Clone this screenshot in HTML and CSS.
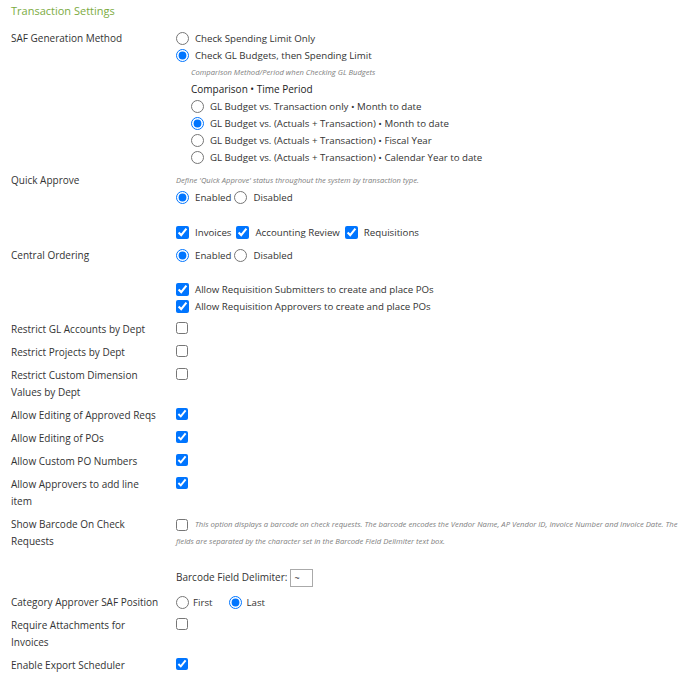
FILE: index.html
```html
<!DOCTYPE html>
<html lang="en">
<head>
    <meta charset="UTF-8">
    <title>Transaction Settings</title>
    <link rel="stylesheet" href="styles.css">
</head>
<body>
    <div class="settings">
        <h2 class="section-title">Transaction Settings</h2>

        <div class="row">
            <div class="label">SAF Generation Method</div>
            <div class="field">
                <label class="opt"><input type="radio" name="saf"> Check Spending Limit Only</label>
                <label class="opt"><input type="radio" name="saf" checked> Check GL Budgets, then Spending Limit</label>
                <div class="sub">
                    <div class="note">Comparison Method/Period when Checking GL Budgets</div>
                    <div class="sub-title">Comparison &bull; Time Period</div>
                    <label class="opt"><input type="radio" name="period"> GL Budget vs. Transaction only &bull; Month to date</label>
                    <label class="opt"><input type="radio" name="period" checked> GL Budget vs. (Actuals + Transaction) &bull; Month to date</label>
                    <label class="opt"><input type="radio" name="period"> GL Budget vs. (Actuals + Transaction) &bull; Fiscal Year</label>
                    <label class="opt"><input type="radio" name="period"> GL Budget vs. (Actuals + Transaction) &bull; Calendar Year to date</label>
                </div>
            </div>
        </div>

        <div class="row">
            <div class="label">Quick Approve</div>
            <div class="field">
                <div class="note flush">Define 'Quick Approve' status throughout the system by transaction type.</div>
                <div class="inline">
                    <label class="opt"><input type="radio" name="quick" checked> Enabled</label>
                    <label class="opt"><input type="radio" name="quick"> Disabled</label>
                </div>
                <div class="spacer tall"></div>
                <div class="inline wide">
                    <label class="opt"><input type="checkbox" checked> Invoices</label>
                    <label class="opt"><input type="checkbox" checked> Accounting Review</label>
                    <label class="opt"><input type="checkbox" checked> Requisitions</label>
                </div>
            </div>
        </div>

        <div class="row">
            <div class="label">Central Ordering</div>
            <div class="field">
                <div class="inline">
                    <label class="opt"><input type="radio" name="central" checked> Enabled</label>
                    <label class="opt"><input type="radio" name="central"> Disabled</label>
                </div>
                <div class="spacer"></div>
                <label class="opt"><input type="checkbox" checked> Allow Requisition Submitters to create and place POs</label>
                <label class="opt"><input type="checkbox" checked> Allow Requisition Approvers to create and place POs</label>
            </div>
        </div>

        <div class="row">
            <div class="label">Restrict GL Accounts by Dept</div>
            <div class="field"><input type="checkbox" class="solo"></div>
        </div>
        <div class="row">
            <div class="label">Restrict Projects by Dept</div>
            <div class="field"><input type="checkbox" class="solo"></div>
        </div>
        <div class="row">
            <div class="label">Restrict Custom Dimension Values by Dept</div>
            <div class="field"><input type="checkbox" class="solo"></div>
        </div>
        <div class="row">
            <div class="label">Allow Editing of Approved Reqs</div>
            <div class="field"><input type="checkbox" class="solo" checked></div>
        </div>
        <div class="row">
            <div class="label">Allow Editing of POs</div>
            <div class="field"><input type="checkbox" class="solo" checked></div>
        </div>
        <div class="row">
            <div class="label">Allow Custom PO Numbers</div>
            <div class="field"><input type="checkbox" class="solo" checked></div>
        </div>
        <div class="row">
            <div class="label">Allow Approvers to add line item</div>
            <div class="field"><input type="checkbox" class="solo" checked></div>
        </div>

        <div class="row">
            <div class="label">Show Barcode On Check Requests</div>
            <div class="field">
                <p class="note para"><input type="checkbox" class="inline-box"> This option displays a barcode on check requests. The barcode encodes the Vendor Name, AP Vendor ID, Invoice Number and Invoice Date. The fields are separated by the character set in the Barcode Field Delimiter text box.</p>
                <div class="spacer"></div>
                <div class="delimiter">
                    Barcode Field Delimiter:
                    <input type="text" class="delim-input" value="~">
                </div>
            </div>
        </div>

        <div class="row">
            <div class="label">Category Approver SAF Position</div>
            <div class="field">
                <div class="inline roomy">
                    <label class="opt tight"><input type="radio" name="position"> First</label>
                    <label class="opt tight"><input type="radio" name="position" checked> Last</label>
                </div>
            </div>
        </div>
        <div class="row">
            <div class="label">Require Attachments for Invoices</div>
            <div class="field"><input type="checkbox" class="solo"></div>
        </div>
        <div class="row">
            <div class="label">Enable Export Scheduler</div>
            <div class="field"><input type="checkbox" class="solo" checked></div>
        </div>
    </div>
</body>
</html>
```

FILE: styles.css
```css
body {
    margin: 0;
    font-family: "Open Sans", Arial, sans-serif;
    font-size: 10px;
    line-height: 17px;
    color: #333;
    background-color: #fff;
}

.settings {
    padding: 2px 6px 0 11px;
}

.section-title {
    margin: 0 0 10px;
    font-size: 11px;
    font-weight: normal;
    line-height: 18px;
    color: #7cab3f;
}

.row {
    display: grid;
    grid-template-columns: 165px 1fr;
    margin-bottom: 6px;
}

.label {
    padding-right: 16px;
}

.field {
    min-width: 0;
}

.opt {
    display: flex;
    align-items: center;
    gap: 6px;
    height: 17px;
    font-size: 9.7px;
    white-space: nowrap;
}

.opt input {
    width: 13px;
    height: 13px;
    margin: 0;
}

.sub {
    padding-left: 15px;
}

.sub-title {
    color: #222;
}

.note {
    font-size: 7.6px;
    font-style: italic;
    color: #808080;
}

.inline {
    display: flex;
    gap: 3px;
}

.inline.wide {
    gap: 5px;
}

.inline.roomy {
    gap: 17px;
}

.opt.tight {
    gap: 4px;
}

.spacer {
    height: 17px;
}

.spacer.tall {
    height: 18px;
}

.solo {
    display: block;
    width: 12px;
    height: 12px;
    margin: 1px 0 0;
}

.para {
    margin: 0;
    font-size: 7.7px;
    line-height: 17px;
}

.inline-box {
    width: 12px;
    height: 12px;
    margin: 3px 5px 0 0;
    vertical-align: top;
}

.delimiter {
    display: flex;
    align-items: center;
    gap: 3px;
    height: 21px;
}

.delim-input {
    width: 23px;
    height: 18px;
    box-sizing: border-box;
    margin: 0;
    padding: 0 3px;
    border: 1px solid #aaa;
    font-family: inherit;
    font-size: 9px;
    color: #333;
}
```
